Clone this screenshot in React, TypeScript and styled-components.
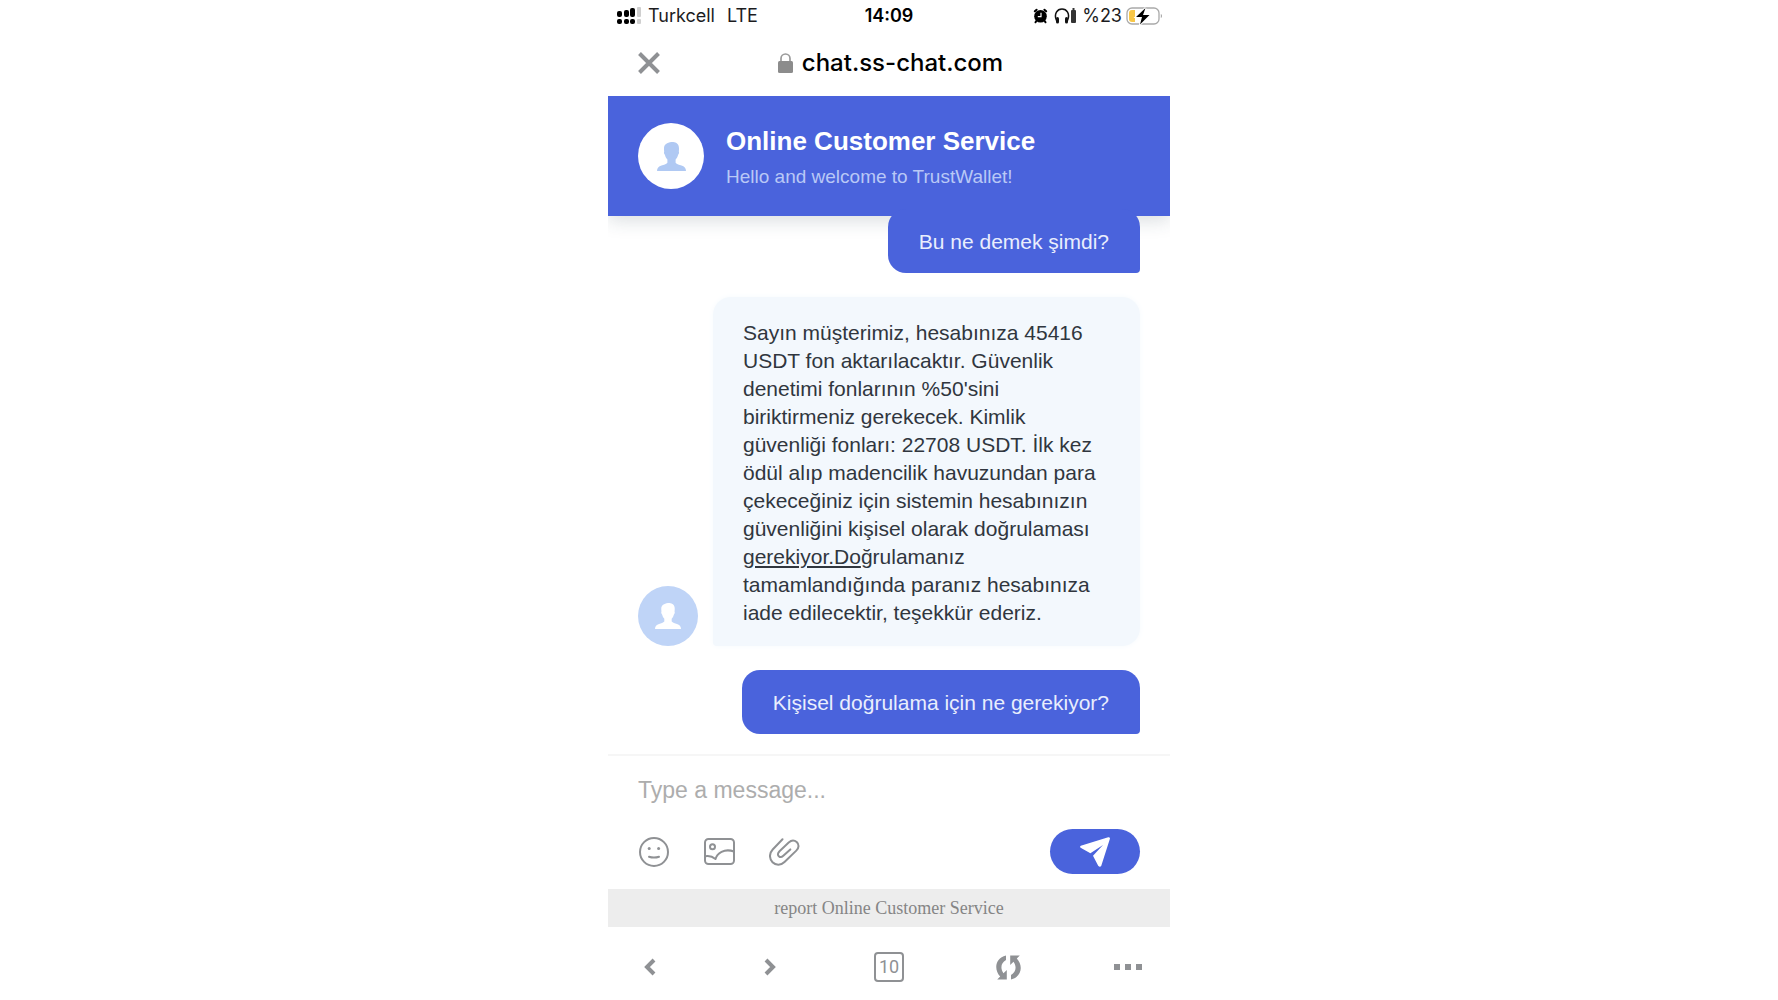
import React from "react";
import styled, { createGlobalStyle } from "styled-components";

const BLUE = "#4a63dc";
const GREY = "#8f9194";
const SANS = '"Liberation Sans", Arial, Helvetica, sans-serif';
const SYSTEM = 'Inter, Roboto, "Liberation Sans", sans-serif';

const GlobalStyle = createGlobalStyle`
  *, *::before, *::after { box-sizing: border-box; }
  body { margin: 0; background: #fff; font-family: ${SANS}; }
  svg { display: block; flex: none; }
`;

const Phone = styled.div`
  display: flex;
  flex-direction: column;
  width: 100%;
  max-width: 562px;
  min-height: 100vh;
  margin: 0 auto;
  background: #fff;
`;

const StatusBar = styled.div`
  display: grid;
  grid-template-columns: 1fr auto 1fr;
  align-items: center;
  height: 30px;
  padding: 2px 8px 0;
  font-family: ${SYSTEM};
  font-size: 18px;
  line-height: 20px;
  color: #1c1c1e;
`;

const StatusGroup = styled.div<{ $end?: boolean }>`
  display: flex;
  align-items: center;
  justify-content: ${(p) => (p.$end ? "flex-end" : "flex-start")};
  gap: ${(p) => (p.$end ? "4px" : "6px")};
`;

const Network = styled.span`
  margin-left: 6px;
`;

const Clock = styled.time`
  font-weight: 600;
  color: #000;
`;

const AddressBar = styled.div`
  display: grid;
  grid-template-columns: 1fr auto 1fr;
  align-items: center;
  height: 66px;
  padding: 0 26px;
`;

const IconButton = styled.button`
  display: flex;
  align-items: center;
  justify-content: center;
  width: 30px;
  height: 32px;
  padding: 0;
  border: 0;
  background: none;
  color: ${GREY};
  cursor: pointer;
`;

const Address = styled.div`
  display: flex;
  align-items: center;
  gap: 9px;
  padding-left: 3px;
  font-family: ${SYSTEM};
  font-size: 24px;
  font-weight: 500;
  line-height: 28px;
  color: #000;
`;

const ChatHeader = styled.header`
  display: flex;
  align-items: center;
  gap: 22px;
  height: 120px;
  padding: 0 30px;
  background: ${BLUE};
  box-shadow: 0 4px 18px rgba(40, 60, 80, 0.18);
  clip-path: inset(0 0 -30px 0);
`;

const Heading = styled.div`
  padding-top: 4px;
`;

const Avatar = styled.div<{ $size: number; $bg: string; $fg: string }>`
  display: flex;
  flex: none;
  align-items: center;
  justify-content: center;
  width: ${(p) => p.$size}px;
  height: ${(p) => p.$size}px;
  border-radius: 50%;
  background: ${(p) => p.$bg};
  color: ${(p) => p.$fg};
`;

const Title = styled.h1`
  margin: 0 0 6px;
  font-size: 26px;
  font-weight: 700;
  line-height: 32px;
  color: #fff;
`;

const Subtitle = styled.p`
  margin: 0;
  font-size: 19px;
  line-height: 28px;
  color: #b9c8f6;
`;

const Messages = styled.main`
  position: relative;
  z-index: 1;
  display: flex;
  flex-direction: column;
  gap: 24px;
  margin-top: -7px;
  padding: 0 30px 20px;
`;

const MessageRow = styled.div<{ $sent?: boolean }>`
  display: flex;
  align-items: flex-end;
  justify-content: ${(p) => (p.$sent ? "flex-end" : "flex-start")};
  gap: 15px;
`;

const Bubble = styled.p<{ $sent?: boolean }>`
  flex: ${(p) => (p.$sent ? "none" : "1")};
  min-width: 0;
  margin: 0;
  padding: ${(p) => (p.$sent ? "19px 31px 17px" : "22px 30px 19px")};
  border-radius: ${(p) => (p.$sent ? "18px 18px 4px 18px" : "18px 18px 18px 4px")};
  background: ${(p) => (p.$sent ? BLUE : "#f3f8fd")};
  box-shadow: ${(p) => (p.$sent ? "none" : "0 0 6px #f6fafd")};
  color: ${(p) => (p.$sent ? "#e9eefd" : "#30363e")};
  font-size: 21px;
  line-height: 28px;
`;

const TextLink = styled.a`
  color: inherit;
  text-decoration: underline;
  text-underline-offset: 2px;
`;

const Composer = styled.form`
  padding: 14px 30px 15px;
  border-top: 2px solid #f6f6f6;
`;

const MessageInput = styled.input`
  display: block;
  width: 100%;
  height: 40px;
  margin-bottom: 19px;
  padding: 0;
  border: 0;
  outline: 0;
  background: none;
  font-family: ${SANS};
  font-size: 23px;
  color: #30363e;
  &::placeholder { color: #adadad; opacity: 1; }
`;

const Tools = styled.div`
  display: flex;
  align-items: center;
  gap: 35px;
  padding-left: 1px;
`;

const SendButton = styled.button`
  display: flex;
  align-items: center;
  justify-content: center;
  width: 90px;
  height: 45px;
  margin-left: auto;
  padding: 0;
  border: 0;
  border-radius: 24px;
  background: ${BLUE};
  color: #fff;
  cursor: pointer;
`;

const ReportBar = styled.footer`
  display: flex;
  align-items: center;
  justify-content: center;
  height: 38px;
  background: #ededed;
`;

const ReportLink = styled.a`
  font-family: "Liberation Serif", "Times New Roman", serif;
  font-size: 18px;
  line-height: 20px;
  color: #858585;
  text-decoration: none;
`;

const BrowserNav = styled.nav`
  display: flex;
  flex: 1;
  align-items: center;
  justify-content: space-between;
  padding: 7px 27px 0;
`;

const TabCount = styled.span`
  display: flex;
  align-items: center;
  justify-content: center;
  width: 30px;
  height: 30px;
  border: 2px solid ${GREY};
  border-radius: 4px;
  font-family: Roboto, "Noto Sans", sans-serif;
  font-size: 18px;
  line-height: 20px;
`;

const Person = ({ size }: { size: number }) => (
  <svg width={size} height={size} viewBox="0 0 29 29" fill="currentColor" aria-hidden="true">
    <path d="M14.500 0C18.500-.3 22 1.400 22 6.200c0 1.300 0 2.100-.2 3.300.5.7.2 2.500-.7 3.200-.5 2-1.300 3.600-2.500 4.800v3.200c1.200 1.500 3.600 2 5.900 2.700 2.800.8 4.500 2.600 4.500 5.600H0c0-3 1.700-4.800 4.500-5.600 2.300-.7 4.700-1.200 5.900-2.700v-3.200c-1.200-1.200-2-2.800-2.500-4.800-.9-.7-1.200-2.500-.7-3.200C7 8.300 7 7.500 7 6.200 7 2.500 10 .8 14.500 0Z" />
  </svg>
);

const Signal = () => (
  <svg width="26" height="18" viewBox="0 0 26 18" aria-hidden="true">
    <g fill="#000">
      <rect x="1" y="4" width="5" height="6" rx="2" />
      <rect x="8" y="3" width="5" height="7" rx="2" />
      <rect x="14" y="1" width="5" height="9" rx="2" />
      <rect x="1" y="12" width="5" height="5" rx="2" />
      <rect x="8" y="12" width="5" height="5" rx="2" />
      <rect x="14" y="12" width="5" height="5" rx="2" />
    </g>
    <g fill="#cfcfcf">
      <rect x="21" y="0" width="4" height="10" rx="1" />
      <rect x="21" y="12" width="4" height="5" rx="1" />
    </g>
  </svg>
);

const Alarm = () => (
  <svg width="15" height="16" viewBox="0 0 15 16" aria-hidden="true">
    <circle cx="7.500" cy="8.300" r="6.300" fill="#000" />
    <path d="M1.800 3.300 3.600 1.700M13.200 3.300 11.400 1.700M3.300 13l-.8 1.300M11.700 13l.8 1.300" stroke="#000" strokeWidth="2" strokeLinecap="round" />
    <path d="M8 4.800v3.900H4.800" stroke="#fff" strokeWidth="1.200" fill="none" />
  </svg>
);

const Headphones = () => (
  <svg width="26" height="18" viewBox="0 0 26 18" aria-hidden="true">
    <path d="M4.500 13.500C1.500 6.500 5.500 2 10 2s8.500 4.500 5.500 11.500" stroke="#111" strokeWidth="1.500" fill="none" />
    <rect x="4" y="10" width="3" height="6.500" rx="1.500" fill="#111" />
    <rect x="13" y="10" width="3" height="6.500" rx="1.500" fill="#111" />
    <rect x="19" y="3" width="5" height="13" rx="1" fill="#333" />
    <rect x="20.500" y="1" width="2" height="2" fill="#333" />
  </svg>
);

const Battery = () => (
  <svg width="36" height="18" viewBox="0 0 36 18" aria-hidden="true">
    <rect x="1" y="1" width="32" height="16" rx="5" fill="#fff" stroke="#a9a9a9" strokeWidth="1.300" />
    <path d="M6 3h3v12H6a3 3 0 0 1-3-3V6a3 3 0 0 1 3-3Z" fill="#f8c748" />
    <path d="M34.800 7c1.600.6 1.600 3.400 0 4Z" fill="#a9a9a9" />
    <path d="M19.500 1 10 10h6l-2 7.500L23.500 8H17Z" fill="#000" stroke="#fff" strokeWidth="2" paintOrder="stroke" />
  </svg>
);

const Lock = () => (
  <svg width="15" height="20" viewBox="0 0 15 20" aria-hidden="true">
    <path d="M3 9V5.500a4.500 4.500 0 0 1 9 0V9" fill="none" stroke="#9a9a9a" strokeWidth="1.700" />
    <rect y="8" width="15" height="12" rx="1.500" fill="#8c8c8c" />
  </svg>
);

const Close = () => (
  <svg width="22" height="22" viewBox="0 0 22 22" aria-hidden="true">
    <path d="m1.500 1.500 19 19m0-19-19 19" stroke={GREY} strokeWidth="4" />
  </svg>
);

const stroke = { fill: "none", stroke: "currentColor", strokeWidth: 2, strokeLinecap: "round" as const, strokeLinejoin: "round" as const };

const Smile = () => (
  <svg width="30" height="30" viewBox="0 0 30 30" {...stroke} aria-hidden="true">
    <circle cx="15" cy="15" r="14" />
    <path d="M10 19.700q5 1.700 10 0" />
    <circle cx="10.200" cy="11.500" r="1.500" fill="currentColor" stroke="none" />
    <circle cx="19.600" cy="11.500" r="1.500" fill="currentColor" stroke="none" />
  </svg>
);

const Picture = () => (
  <svg width="31" height="27" viewBox="0 0 31 27" {...stroke} aria-hidden="true">
    <rect x="1" y="1" width="29" height="25" rx="3.500" />
    <circle cx="8.500" cy="8.700" r="2.500" />
    <path d="M1 18.300c4-.9 7.500.2 10.500 2.700C13 15.500 20 10 30 13.500" />
  </svg>
);

const Clip = () => (
  <svg width="31" height="28" viewBox="0 0 31 28" {...stroke} aria-hidden="true">
    <path d="M13.500 1.300 3.700 11.500c-3.700 4-3.500 9.300-.2 12.700 3.300 3.300 8.500 3.300 12-.2L27.300 12.600c2.900-2.900 2.900-6.200.4-8.500-2.400-2.200-5.500-1.900-8 .4l-9.200 8.700c-2 2-1.900 3.900-.7 5 1.300 1.200 3 1 4.500-.4l7-6.400" />
  </svg>
);

const Plane = () => (
  <svg width="30" height="30" viewBox="0 0 30 30" fill="currentColor" aria-hidden="true">
    <path d="M28.200.2.800 8.800q-1.300.9-.2 1.900l9.800 5.500L23 8 13 18.800l5.200 9.900q1.700 1.800 3 .2L30 1.600Q29.900 0 28.200.2Z" />
  </svg>
);

const Chevron = ({ right }: { right?: boolean }) => (
  <svg width="12" height="18" viewBox="0 0 12 18" aria-hidden="true">
    <path d={right ? "m2 2 7 7-7 7" : "m10 2-7 7 7 7"} fill="none" stroke="currentColor" strokeWidth="4" />
  </svg>
);

const Refresh = () => (
  <svg width="25" height="25" viewBox="0 0 25 25" fill="currentColor" aria-hidden="true">
    <path d="M10 .5v4.600C5 8 4 13 7.500 18.200L10.800 15v9.500H1.200l3-3C-2.200 14.500-1.200 3.500 10 .5Z" />
    <path d="M15 24.500v-4.600c5-2.900 6-7.900 2.500-13.100L14.200 10V.5h9.600l-3 3C27.200 10.500 26.200 21.500 15 24.500Z" />
  </svg>
);

const Dots = () => (
  <svg width="28" height="6" viewBox="0 0 28 6" fill="currentColor" aria-hidden="true">
    <path d="M0 0h6v6H0zM11 0h6v6h-6zM22 0h6v6h-6z" />
  </svg>
);

export default function App() {
  return (
    <>
      <GlobalStyle />
      <Phone>
        <StatusBar>
          <StatusGroup>
            <Signal />
            <span>Turkcell</span>
            <Network>LTE</Network>
          </StatusGroup>
          <Clock>14:09</Clock>
          <StatusGroup $end>
            <Alarm />
            <Headphones />
            <span>%23</span>
            <Battery />
          </StatusGroup>
        </StatusBar>
        <AddressBar>
          <IconButton type="button" aria-label="Close">
            <Close />
          </IconButton>
          <Address>
            <Lock />
            <span>chat.ss-chat.com</span>
          </Address>
        </AddressBar>
        <ChatHeader>
          <Avatar $size={66} $bg="#fff" $fg="#b0c9f3">
            <Person size={29} />
          </Avatar>
          <Heading>
            <Title>Online Customer Service</Title>
            <Subtitle>Hello and welcome to TrustWallet!</Subtitle>
          </Heading>
        </ChatHeader>
        <Messages>
          <MessageRow $sent>
            <Bubble $sent>Bu ne demek şimdi?</Bubble>
          </MessageRow>
          <MessageRow>
            <Avatar $size={60} $bg="#bfd4f7" $fg="#fff">
              <Person size={26} />
            </Avatar>
            <Bubble>
              Sayın müşterimiz, hesabınıza 45416 USDT fon aktarılacaktır. Güvenlik denetimi fonlarının
              %50'sini biriktirmeniz gerekecek. Kimlik güvenliği fonları: 22708 USDT. İlk kez ödül alıp
              madencilik havuzundan para çekeceğiniz için sistemin hesabınızın güvenliğini kişisel olarak
              doğrulaması <TextLink href="#">gerekiyor.Do</TextLink>ğrulamanız tamamlandığında paranız
              hesabınıza iade edilecektir, teşekkür ederiz.
            </Bubble>
          </MessageRow>
          <MessageRow $sent>
            <Bubble $sent>Kişisel doğrulama için ne gerekiyor?</Bubble>
          </MessageRow>
        </Messages>
        <Composer onSubmit={(e) => e.preventDefault()}>
          <MessageInput type="text" placeholder="Type a message..." aria-label="Type a message" />
          <Tools>
            <IconButton type="button" aria-label="Emoji">
              <Smile />
            </IconButton>
            <IconButton type="button" aria-label="Send a picture">
              <Picture />
            </IconButton>
            <IconButton type="button" aria-label="Attach a file">
              <Clip />
            </IconButton>
            <SendButton type="submit" aria-label="Send">
              <Plane />
            </SendButton>
          </Tools>
        </Composer>
        <ReportBar>
          <ReportLink href="#">report Online Customer Service</ReportLink>
        </ReportBar>
        <BrowserNav aria-label="Browser">
          <IconButton type="button" aria-label="Back">
            <Chevron />
          </IconButton>
          <IconButton type="button" aria-label="Forward">
            <Chevron right />
          </IconButton>
          <IconButton type="button" aria-label="Tabs">
            <TabCount>10</TabCount>
          </IconButton>
          <IconButton type="button" aria-label="Reload">
            <Refresh />
          </IconButton>
          <IconButton type="button" aria-label="More">
            <Dots />
          </IconButton>
        </BrowserNav>
      </Phone>
    </>
  );
}
